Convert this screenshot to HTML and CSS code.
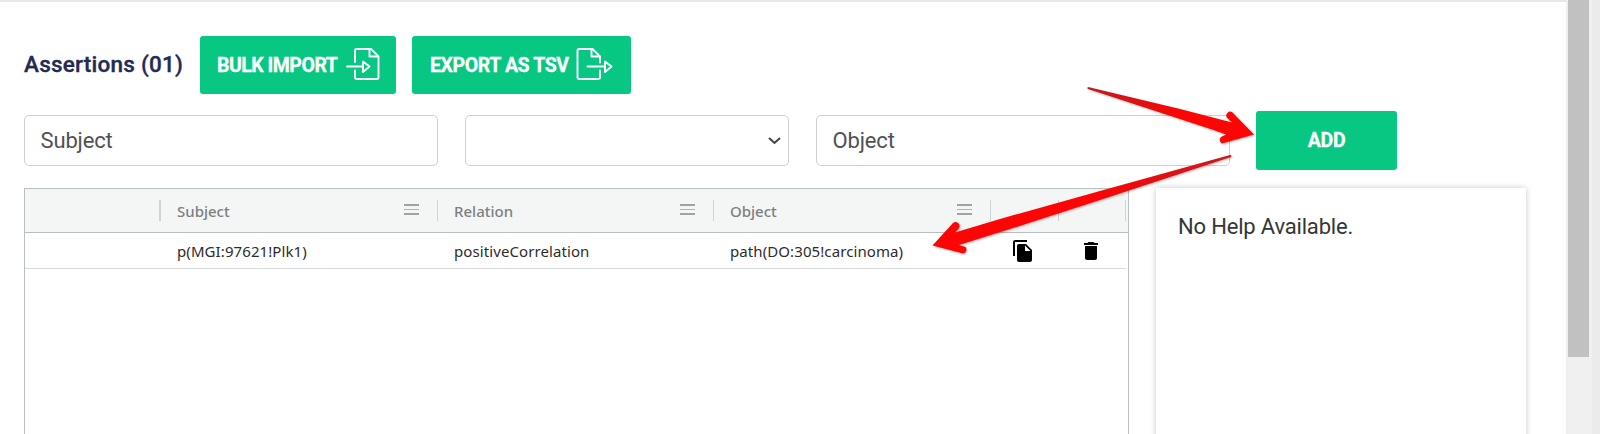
FILE: index.html
```html
<!DOCTYPE html>
<html lang="en">
<head>
<meta charset="utf-8">
<title>Assertions</title>
<link rel="stylesheet" href="styles.css">
</head>
<body>
<div class="page">
  <main class="content">
    <header class="toolbar">
      <h1 class="title">Assertions (01)</h1>
      <button class="btn btn-import"><span class="btn-label label-import">BULK IMPORT</span>
        <svg class="file-icon" width="34" height="34" viewBox="0 0 34 34" fill="none" stroke="#fff" stroke-width="1.9" stroke-linejoin="round" stroke-linecap="round"><path d="M9 15V3.5Q9 2 10.500 2H25L32.500 9.500V30.500Q32.500 32 31 32H10.500Q9 32 9 30.500V23.500"/><path d="M23.500 2V9.500H32"/><path d="M1 19.500H17M17 14.500V25L23.500 19.500Z"/></svg>
      </button>
      <button class="btn btn-export"><span class="btn-label label-export">EXPORT AS TSV</span>
        <svg class="file-icon" width="37" height="34" viewBox="0 0 37 34" fill="none" stroke="#fff" stroke-width="1.9" stroke-linejoin="round" stroke-linecap="round"><path d="M24 15.500V9.500L16.500 2H3Q1.500 2 1.500 3.500V30.500Q1.500 32 3 32H22.500Q24 32 24 30.500V23.500"/><path d="M15.500 2V9.500H23.500"/><path d="M11.500 19.500H29M29 14.500V25L35.500 19.500Z"/></svg>
      </button>
    </header>
    <section class="form">
      <div class="field field-text"><span class="label-field">Subject</span></div>
      <div class="field field-select">
        <svg width="13" height="8" viewBox="0 0 13 8" fill="none" stroke="#444" stroke-width="2"><path d="M1 1L6.500 6L12 1"/></svg>
      </div>
      <div class="field field-text"><span class="label-field">Object</span></div>
      <button class="btn btn-add"><span class="btn-label label-add">ADD</span></button>
    </section>
    <section class="panels">
      <div class="grid">
        <div class="grid-row grid-head">
          <div class="cell"><i class="sep sep-wide"></i></div>
          <div class="cell"><span class="head-subject">Subject</span><i class="menu"></i><i class="sep"></i></div>
          <div class="cell"><span class="head-relation">Relation</span><i class="menu"></i><i class="sep"></i></div>
          <div class="cell"><span class="head-object">Object</span><i class="menu"></i><i class="sep"></i></div>
          <div class="cell"><i class="sep"></i></div>
          <div class="cell"><i class="sep"></i></div>
        </div>
        <div class="grid-row grid-body">
          <div class="cell"></div>
          <div class="cell"><span class="body-subject">p(MGI:97621!Plk1)</span></div>
          <div class="cell"><span class="body-relation">positiveCorrelation</span></div>
          <div class="cell"><span class="body-object">path(DO:305!carcinoma)</span></div>
          <div class="cell cell-icon"><svg width="24" height="24" viewBox="0 0 24 24"><path d="M16 1H4C2.900 1 2 1.900 2 3v14h2V3h12V1zm-1 4l6 6v10c0 1.100-.9 2-2 2H7.990C6.890 23 6 22.100 6 21l.01-14c0-1.100.89-2 1.990-2h7zm-1 7h5.500L14 6.500V12z"/></svg></div>
          <div class="cell cell-icon"><svg width="24" height="24" viewBox="0 0 24 24"><path d="M6 19c0 1.100.9 2 2 2h8c1.100 0 2-.9 2-2V7H6v12zM19 4h-3.500l-1-1h-5l-1 1H5v2h14V4z"/></svg></div>
        </div>
      </div>
      <aside class="help"><span class="help-text">No Help Available.</span></aside>
    </section>
  </main>
  <div class="scrollbar"><div class="thumb"></div></div>
  <div class="edge"></div>
</div>
<svg class="arrows" width="1600" height="434" viewBox="0 0 1600 434">
  <defs>
    <linearGradient id="fadeRight" gradientUnits="userSpaceOnUse" x1="1087" y1="88" x2="1180" y2="115"><stop offset="0" stop-color="#bd1d22"/><stop offset="1" stop-color="#fb0505"/></linearGradient>
    <linearGradient id="fadeLeft" gradientUnits="userSpaceOnUse" x1="1231" y1="156" x2="1090" y2="199"><stop offset="0" stop-color="#c9191d"/><stop offset="1" stop-color="#fb0505"/></linearGradient>
  </defs>
  <path fill="url(#fadeRight)" d="M1088 87L1180 109L1232 122.500L1226.500 117A4 4 0 0 1 1232 112L1254 134.500L1222 143.500A4 4 0 0 1 1221 137L1226 134.500L1215 130.500L1088 89Q1086.500 88 1088 87Z"/>
  <path fill="url(#fadeLeft)" d="M1230 155L1100 191L1000 219L955 232.500L959 228A4 4 0 0 0 953 223L932.500 245.500L963 253.500A4 4 0 0 0 965.500 247L959 245L1010 229L1100 200L1231 157Q1232 155 1230 155Z"/>
</svg>
</body>
</html>
```
FILE: styles.css
```css
* { box-sizing: border-box; }
body { margin: 0; background: #fff; font-family: Roboto, sans-serif; overflow: hidden; }
.page { display: flex; height: 434px; overflow: hidden; }
.content { width: 1566px; flex: none; border-top: 2px solid #e8e8e8; padding: 34px 0 0 24px; }
.toolbar { display: flex; align-items: center; height: 58px; }
.title { width: 176px; margin: 0; padding-bottom: 2px; font-size: 22.500px; font-weight: 500; letter-spacing: .24px; -webkit-text-stroke: .35px #222b52; color: #222b52; white-space: nowrap; line-height: 26px; }
.btn { display: flex; align-items: center; height: 58px; border: 0; border-radius: 3px; padding: 0 0 0 17px; background: #07c782; color: #fff; font-family: Roboto, sans-serif; font-size: 19.500px; font-weight: 700; white-space: nowrap; flex: none; -webkit-text-stroke: .3px #fff; }
.btn-import { width: 196px; }
.btn-export { width: 219px; margin-left: 16px; }
.file-icon { flex: none; margin-bottom: 2px; }
.label-import { width: 129px; text-align: left; letter-spacing: -.5px; }
.label-export { width: 147px; padding-left: 1px; text-align: left; letter-spacing: -.4px; }
.btn-add { width: 141px; height: 59px; padding: 0; justify-content: center; letter-spacing: -.3px; }
.form { display: flex; align-items: center; gap: 27px; height: 59px; margin-top: 17px; }
.field { display: flex; align-items: center; height: 51px; border: 1px solid #cdcfd0; border-radius: 5px; padding: 0 7px 0 15.500px; font-size: 22px; letter-spacing: -.15px; color: #505152; }
.field-text { width: 414px; }
.field-select { width: 324px; justify-content: flex-end; }
.field-text + .btn { margin-left: -1px; }
.panels { display: flex; gap: 27px; margin-top: 18px; height: 260px; }
.grid { width: 1105px; border: 1px solid #babfc0; font-family: "Noto Sans", sans-serif; }
.grid-row { display: grid; grid-template-columns: 136px 277px 276px 277px 68px 67px; }
.cell { display: flex; align-items: center; padding-left: 16px; min-width: 0; white-space: nowrap; }
.grid-head { height: 44px; background: #f4f6f6; border-bottom: 1px solid #b8bdbe; color: #7d8080; font-size: 15px; font-weight: 500; }
.grid-body { height: 36px; width: 1101px; border-bottom: 1px solid #d8dbdb; color: #2c2c2c; font-size: 15px; letter-spacing: .09px; }
.sep { width: 1px; height: 21px; background: #d0d4d4; margin-left: auto; }
.sep-wide { width: 2px; }
.menu { width: 15px; height: 11px; margin: 0 0 2px auto; background: linear-gradient(#a0a3a3, #a0a3a3) top / 100% 2px no-repeat, linear-gradient(#b0b3b3, #b0b3b3) center / 100% 1px no-repeat, linear-gradient(#a0a3a3, #a0a3a3) bottom / 100% 2px no-repeat; }
.menu + .sep { margin-left: 18px; }
.cell-icon { padding: 0 4px 0 0; justify-content: center; }
.help { width: 370px; padding: 23px 0 0 22px; box-shadow: 0 0 6px rgba(0, 0, 0, .22); background: #fff; font-size: 22px; line-height: 31px; letter-spacing: -.18px; color: #343637; }
.scrollbar { width: 26px; background: #f0f0f0; padding-left: 2px; flex: none; }
.thumb { width: 21px; height: 357px; background: #c1c1c1; }
.edge { width: 8px; background: #ebebeb; }
.arrows { position: absolute; left: 0; top: 0; filter: drop-shadow(1px 1px 1px rgba(70, 0, 0, .3)); }
```
